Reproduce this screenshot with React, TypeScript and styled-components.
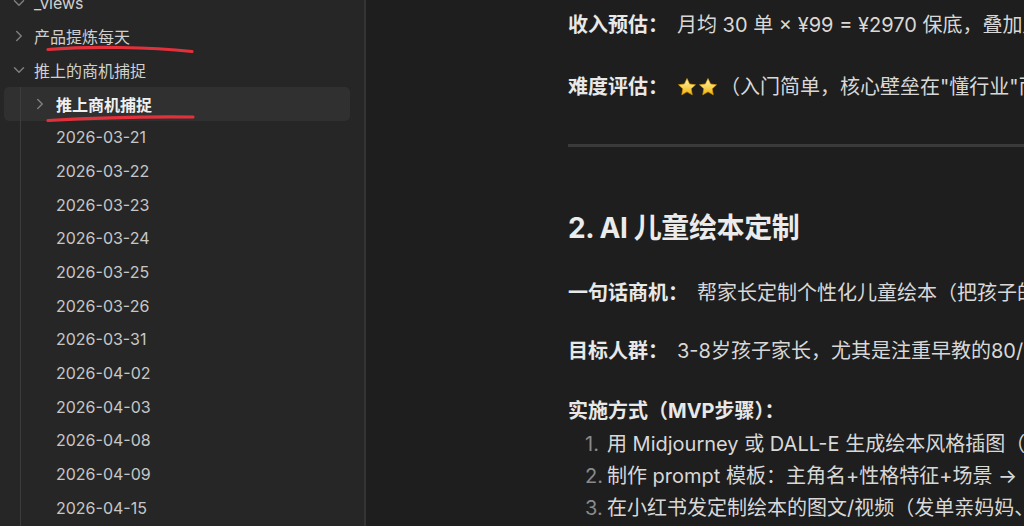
import React from 'react';
import styled, { createGlobalStyle } from 'styled-components';
import { ChevronRight, ChevronDown } from 'lucide-react';

const GlobalStyle = createGlobalStyle`
  html, body, #root {
    margin: 0;
    padding: 0;
    height: 100%;
  }
  body {
    background: #1e1e1e;
    font-family: Inter, "Noto Sans CJK SC", "Noto Sans", sans-serif;
    overflow: hidden;
  }
`;

const Shell = styled.div`
  display: flex;
  width: 1024px;
  height: 526px;
  overflow: hidden;
`;

const Sidebar = styled.aside`
  position: relative;
  width: 364px;
  flex-shrink: 0;
  background: #262626;
  border-right: 2px solid #343434;
  overflow: hidden;
`;

const Tree = styled.div`
  margin-top: -14px;
  padding: 0 14px 0 4px;
`;

const Row = styled.div<{ $indent: number; $gap: number; $active?: boolean }>`
  display: flex;
  align-items: center;
  gap: ${(p) => p.$gap}px;
  height: 33.67px;
  padding-left: ${(p) => p.$indent}px;
  border-radius: 5px;
  background: ${(p) => (p.$active ? '#303030' : 'transparent')};
  color: ${(p) => (p.$active ? '#efefef' : '#d0d0d0')};
  font-size: 16px;
  font-weight: ${(p) => (p.$active ? 600 : 400)};
  white-space: nowrap;

  svg {
    flex-shrink: 0;
    color: #7e7e7e;
  }
`;

const DateLabel = styled.span`
  color: #c6c6c6;
  font-size: 16px;
`;

const Children = styled.div`
  position: relative;

  &::before {
    content: '';
    position: absolute;
    left: 16px;
    top: 0;
    bottom: -40px;
    width: 1px;
    background: #3c3c3c;
  }
`;

const Marks = styled.svg`
  position: absolute;
  left: 0;
  top: 0;
  pointer-events: none;
`;

const Main = styled.main`
  flex: 1;
  padding: 10px 0 0 202px;
  overflow: hidden;
  color: #d8d8d8;
  font-size: 20px;
`;

const Para = styled.p<{ $gap?: number }>`
  margin: 0 0 ${(p) => p.$gap ?? 32}px;
  line-height: 30px;
  white-space: nowrap;
`;

const Label = styled.strong`
  color: #e8e8e8;
  font-weight: 700;
  margin-right: 9px;
`;

const Rule = styled.hr`
  border: none;
  height: 3px;
  background: #3a3a3a;
  margin: 42px 0 0;
`;

const Heading = styled.h2`
  margin: 61px 0 30px;
  font-size: 28px;
  line-height: 40px;
  font-weight: 700;
  color: #ebebeb;
  letter-spacing: -0.4px;
  white-space: nowrap;
`;

const Steps = styled.ol`
  margin: 2px 0 0;
  padding: 0 0 0 39px;
  list-style: none;
  counter-reset: step;
`;

const Step = styled.li`
  position: relative;
  line-height: 32px;
  white-space: nowrap;
  counter-increment: step;

  &::before {
    content: counter(step) '.';
    position: absolute;
    left: -22px;
    color: #8a8a8a;
  }
`;

const Stars = styled.span`
  display: inline-flex;
  gap: 1px;
  vertical-align: -3px;
  margin-right: 2px;
`;

const Star = () => (
  <svg width="20" height="20" viewBox="0 0 24 24">
    <defs>
      <linearGradient id="sg" x1="0" y1="0" x2="0" y2="1">
        <stop offset="0" stopColor="#fff6b0" />
        <stop offset="1" stopColor="#f2b40c" />
      </linearGradient>
    </defs>
    <path
      d="M12 1.8l3.1 6.6 7.1.9-5.2 4.9 1.3 7.1L12 17.8l-6.3 3.5 1.3-7.1-5.2-4.9 7.1-.9z"
      fill="url(#sg)"
      stroke="#d99a00"
      strokeWidth="0.8"
      strokeLinejoin="round"
    />
  </svg>
);

const dates = [
  '2026-03-21',
  '2026-03-22',
  '2026-03-23',
  '2026-03-24',
  '2026-03-25',
  '2026-03-26',
  '2026-03-31',
  '2026-04-02',
  '2026-04-03',
  '2026-04-08',
  '2026-04-09',
  '2026-04-15',
  '2026-04-16',
];

export default function App() {
  return (
    <>
      <GlobalStyle />
      <Shell>
        <Sidebar>
          <Tree>
            <Row $indent={6} $gap={6}>
              <ChevronDown size={18} />
              <span>_views</span>
            </Row>
            <Row $indent={6} $gap={6}>
              <ChevronRight size={18} />
              <span>产品提炼每天</span>
            </Row>
            <Row $indent={6} $gap={6}>
              <ChevronDown size={18} />
              <span>推上的商机捕捉</span>
            </Row>
            <Children>
              <Row $indent={27} $gap={7} $active>
                <ChevronRight size={18} />
                <span>推上商机捕捉</span>
              </Row>
              {dates.map((d) => (
                <Row key={d} $indent={52} $gap={0}>
                  <DateLabel>{d}</DateLabel>
                </Row>
              ))}
            </Children>
          </Tree>
          <Marks width="364" height="140">
            <path
              d="M48 49.5 C 90 46, 150 47, 192 51.5"
              stroke="#e3313c"
              strokeWidth="3.2"
              fill="none"
              strokeLinecap="round"
            />
            <path
              d="M48 120.5 C 100 117.5, 150 116.5, 193 117"
              stroke="#e3313c"
              strokeWidth="3.2"
              fill="none"
              strokeLinecap="round"
            />
          </Marks>
        </Sidebar>
        <Main>
          <Para>
            <Label>收入预估：</Label>月均 30 单 × ¥99 = ¥2970 保底，叠加月度订阅与加急服务
          </Para>
          <Para $gap={0}>
            <Label>难度评估：</Label>
            <Stars>
              <Star />
              <Star />
            </Stars>
            （入门简单，核心壁垒在"懂行业"而不是技术）
          </Para>
          <Rule />
          <Heading>2. AI 儿童绘本定制</Heading>
          <Para $gap={28}>
            <Label>一句话商机：</Label>帮家长定制个性化儿童绘本（把孩子的名字和形象画进故事）
          </Para>
          <Para $gap={30}>
            <Label>目标人群：</Label>3-8岁孩子家长，尤其是注重早教的80/90后父母
          </Para>
          <Para $gap={0}>
            <Label>实施方式（MVP步骤）：</Label>
          </Para>
          <Steps>
            <Step>用 Midjourney 或 DALL-E 生成绘本风格插图（先做样书）</Step>
            <Step>制作 prompt 模板：主角名+性格特征+场景 → 自动生成故事</Step>
            <Step>在小红书发定制绘本的图文/视频（发单亲妈妈、宝妈群）</Step>
          </Steps>
        </Main>
      </Shell>
    </>
  );
}
